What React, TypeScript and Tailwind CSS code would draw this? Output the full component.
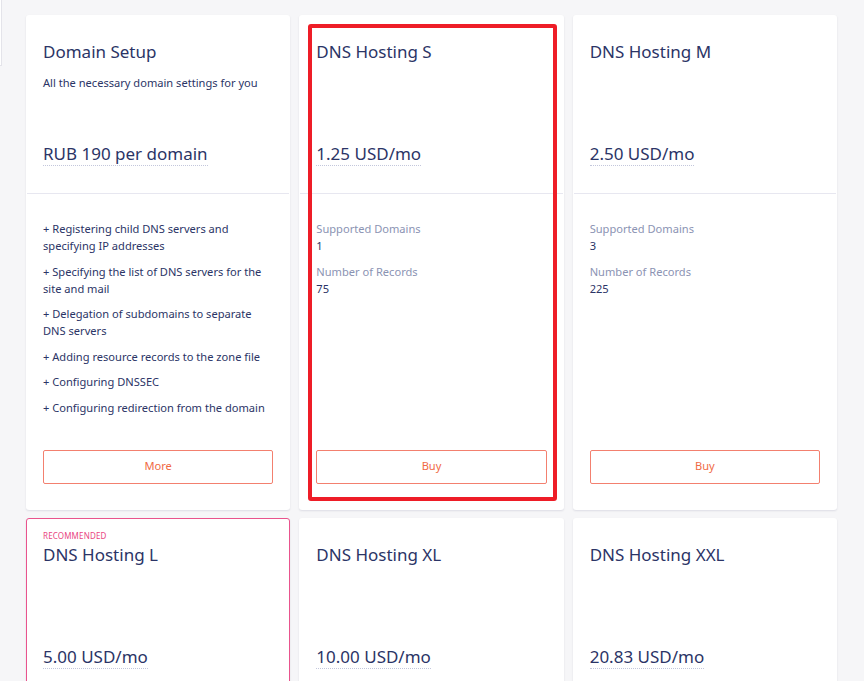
import React from 'react';

type Plan = {
  name: string;
  subtitle?: string;
  price: string;
  features?: string[];
  specs?: { label: string; value: string }[];
  action: string;
  recommended?: boolean;
  highlighted?: boolean;
};

const plans: Plan[] = [
  {
    name: 'Domain Setup',
    subtitle: 'All the necessary domain settings for you',
    price: 'RUB 190 per domain',
    features: [
      '+ Registering child DNS servers and specifying IP addresses',
      '+ Specifying the list of DNS servers for the site and mail',
      '+ Delegation of subdomains to separate DNS servers',
      '+ Adding resource records to the zone file',
      '+ Configuring DNSSEC',
      '+ Configuring redirection from the domain',
    ],
    action: 'More',
  },
  {
    name: 'DNS Hosting S',
    price: '1.25 USD/mo',
    specs: [
      { label: 'Supported Domains', value: '1' },
      { label: 'Number of Records', value: '75' },
    ],
    action: 'Buy',
    highlighted: true,
  },
  {
    name: 'DNS Hosting M',
    price: '2.50 USD/mo',
    specs: [
      { label: 'Supported Domains', value: '3' },
      { label: 'Number of Records', value: '225' },
    ],
    action: 'Buy',
  },
  {
    name: 'DNS Hosting L',
    price: '5.00 USD/mo',
    specs: [
      { label: 'Supported Domains', value: '10' },
      { label: 'Number of Records', value: '750' },
    ],
    action: 'Buy',
    recommended: true,
  },
  {
    name: 'DNS Hosting XL',
    price: '10.00 USD/mo',
    specs: [
      { label: 'Supported Domains', value: '25' },
      { label: 'Number of Records', value: '1875' },
    ],
    action: 'Buy',
  },
  {
    name: 'DNS Hosting XXL',
    price: '20.83 USD/mo',
    specs: [
      { label: 'Supported Domains', value: '50' },
      { label: 'Number of Records', value: '3750' },
    ],
    action: 'Buy',
  },
];

function PlanCard({ plan }: { plan: Plan }) {
  return (
    <div
      className={`relative flex flex-col bg-white rounded-[3px] shadow-[0_1px_2px_rgba(40,45,90,0.12)] ${
        plan.recommended ? 'border border-[#e9538d]' : 'border border-transparent'
      }`}
    >
      {/* header */}
      <div className="h-[178px] flex flex-col px-[16px] pt-[24px] pb-[27px] border-b border-[#e7e7f0]">
        <div className="h-0 relative">
          {plan.recommended && (
            <span className="absolute -top-[11px] left-0 text-[8px] leading-none uppercase tracking-[0.02em] text-[#e9457f]">
              Recommended
            </span>
          )}
        </div>
        <h3 className="text-[17px] leading-[24px] text-[#2b3466]">{plan.name}</h3>
        {plan.subtitle && (
          <p className="mt-[10px] text-[11.1px] leading-[17px] text-[#2b3466]">{plan.subtitle}</p>
        )}
        <div className="mt-auto">
          <span className="inline-block text-[17px] leading-[23px] text-[#2b3466] border-b border-dotted border-[#c3c7dc]">
            {plan.price}
          </span>
        </div>
      </div>

      {/* body */}
      <div className="flex-1 flex flex-col px-[16px] pt-[26px] pb-[25px]">
        <div className="flex-1 flex flex-col gap-[8.5px] text-[11.1px] leading-[17px]">
          {plan.features?.map((f) => (
            <p key={f} className="text-[#2b3466]">{f}</p>
          ))}
          {plan.specs?.map((s) => (
            <div key={s.label}>
              <p className="text-[#8b93b3]">{s.label}</p>
              <p className="text-[#2b3466]">{s.value}</p>
            </div>
          ))}
        </div>
        <button className="mt-[34px] h-[34px] w-full rounded-[2px] border border-[#f3806f] text-[11.1px] text-[#f06a45] bg-white">
          {plan.action}
        </button>
      </div>

      {plan.highlighted && (
        <div className="absolute top-[8px] left-[8px] right-[6px] bottom-[8px] border-[4px] border-[#ee1d27] rounded-[3px] pointer-events-none" />
      )}
    </div>
  );
}

export default function App() {
  return (
    <div className="min-h-screen bg-[#f6f6f8] overflow-hidden" style={{ fontFamily: '"Noto Sans", "Open Sans", sans-serif' }}>
      <div className="flex items-start">
        <div className="w-[2px] h-[66px] bg-white border-r border-b border-[#e4e4ea] shrink-0" />
        <div className="ml-[24px] mt-[15px] w-[811px] grid grid-cols-3 gap-x-[9px] gap-y-[8px]">
          {plans.map((p) => (
            <PlanCard key={p.name} plan={p} />
          ))}
        </div>
      </div>
    </div>
  );
}
